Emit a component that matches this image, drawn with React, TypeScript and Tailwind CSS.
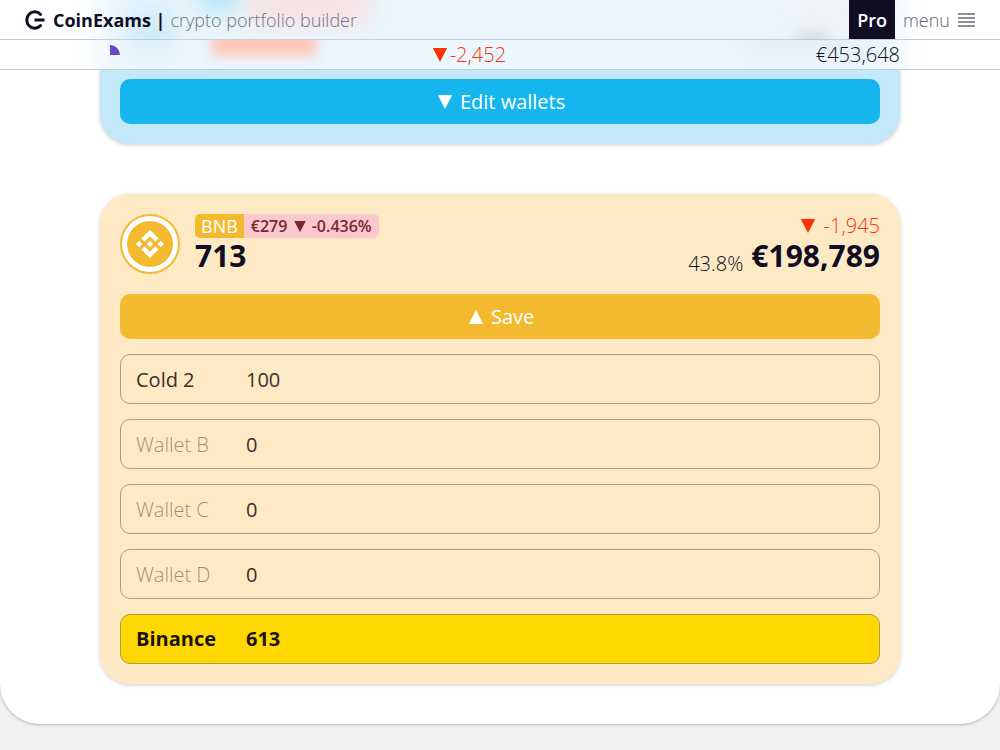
import React from "react";
import { SiBinance } from "react-icons/si";

const wallets = [
  { name: "Cold 2", amount: "100", style: "text-[#38302c]" },
  { name: "Wallet B", amount: "0", style: "font-light text-[#38302c]/50" },
  { name: "Wallet C", amount: "0", style: "font-light text-[#38302c]/50" },
  { name: "Wallet D", amount: "0", style: "font-light text-[#38302c]/50" },
];

function Logo() {
  return (
    <svg width="20" height="20" viewBox="0 0 20 20" fill="none" stroke="#110d24" strokeWidth="3">
      <path d="M15.6 4.4A8 8.2 0 1 0 15.6 15.6" strokeLinecap="round" />
      <path d="M9.5 10h10" />
    </svg>
  );
}

function MenuIcon() {
  return (
    <svg width="17" height="14" viewBox="0 0 17 14" fill="#8f8d98">
      <rect y="0" width="17" height="2" />
      <rect y="4" width="17" height="2" />
      <rect y="8" width="17" height="2" />
      <rect y="12" width="17" height="2" />
    </svg>
  );
}

// sized in em so it follows the text beside it
function Triangle({ up = false }: { up?: boolean }) {
  return (
    <svg className="inline w-[1em] align-baseline" viewBox="0 0 20 14" fill="currentColor" aria-hidden="true">
      <path d={up ? "M10 0L17.2 14H2.8Z" : "M2.8 0H17.2L10 14Z"} />
    </svg>
  );
}

function Header() {
  return (
    <header className="sticky top-0 z-10 bg-white">
      <div className="relative overflow-hidden border-b border-[#c3cbd4]">
        <div aria-hidden="true" className="absolute inset-0 flex justify-center">
          <div className="relative w-full max-w-[800px]">
            <div className="absolute -inset-y-8 inset-x-0 bg-[#ebf6fd] blur-md" />
            <div className="absolute left-7 top-1 h-14 w-12 rounded-full bg-[#cdecf9] blur-md" />
            <div className="absolute left-24 -top-6 h-9 w-12 rounded-full bg-[#b5e4f8] blur-md" />
            <div className="absolute left-36 -top-3 h-9 w-32 rounded-full bg-[#f8e0e0] blur-md" />
            <div className="absolute right-6 -top-2 h-10 w-24 rounded-full bg-[#f1f3f6] blur-md" />
            <div className="absolute right-18 top-9 h-4 w-8 rounded-full bg-[#c3c9d3] blur-sm" />
          </div>
        </div>
        <div className="relative flex h-[39px] items-center justify-between px-[25px]">
          <a href="#" className="flex items-center text-lg">
            <Logo />
            <span className="ml-2 font-bold">CoinExams |</span>
            <span className="ml-[5px] font-light text-[#6f7580]">crypto portfolio builder</span>
          </a>
          <nav className="flex h-full items-center text-lg">
            <a href="#" className="flex h-full items-center bg-[#110d24] px-2 font-semibold text-white">
              Pro
            </a>
            <button className="flex items-center gap-2 pl-2 font-light text-[#66646f]">
              menu
              <MenuIcon />
            </button>
          </nav>
        </div>
      </div>
      <div className="relative overflow-hidden border-b border-[#c3cbd4]">
        <div aria-hidden="true" className="absolute inset-0 flex justify-center">
          <div className="relative w-full max-w-[800px]">
            <div className="absolute -inset-y-8 inset-x-0 bg-[#ebf6fd] blur-md" />
            <div className="absolute left-9 -top-3 h-5 w-8 rounded-full bg-[#cdecf9] blur-md" />
            <div className="absolute left-28 -top-2 h-6 w-26 bg-[#ffc5b6] blur-[6px]" />
            <div className="absolute right-10 -top-3 h-5 w-28 bg-[#e3eaf1] blur-md" />
          </div>
        </div>
        <div className="relative mx-auto flex h-[29px] max-w-[800px] items-center justify-between text-xl font-light">
          <svg width="20" height="20" viewBox="0 0 20 20">
            <path d="M10 10V0A10 10 0 0 1 20 10Z" fill="#6449c8" />
          </svg>
          <p className="text-[#fa3208]">
            <Triangle />
            -2,452
          </p>
          <p>€453,648</p>
        </div>
      </div>
    </header>
  );
}

export default function App() {
  return (
    <div className="min-h-screen bg-[#f2f2f2] font-['Open_Sans',sans-serif] text-[#110d24]">
      <div className="rounded-b-[40px] bg-white pb-10 shadow-[0_1px_3px_rgba(0,0,0,0.25)]">
        <Header />
        <main className="mx-auto flex max-w-[800px] flex-col gap-[50px]">
          <section className="rounded-b-[30px] bg-[#c3e8fa] px-5 pb-5 pt-[9px] shadow-[0_1px_4px_rgba(0,0,0,0.2)]">
            <button className="h-[45px] w-full rounded-[10px] bg-[#15b5ee] text-xl text-white">
              <Triangle /> Edit wallets
            </button>
          </section>

          <section className="flex flex-col gap-[15px] rounded-[30px] bg-[#fde9c3] p-5 shadow-[0_1px_4px_rgba(0,0,0,0.2)]">
            <div className="mb-[5px] flex gap-[15px]">
              <div className="flex size-[60px] items-center justify-center rounded-full border-2 border-[#f3ba2f] bg-white">
                <div className="flex size-[46px] items-center justify-center rounded-full bg-[#f3ba2f] text-white">
                  <SiBinance size={28} />
                </div>
              </div>
              <div>
                <div className="flex h-6 overflow-hidden rounded-[5px] leading-6">
                  <span className="bg-[#f3ba2f] px-1.5 text-lg leading-6 text-white">BNB</span>
                  <span className="bg-[#fac8cd] px-[7px] font-semibold text-[#7b2535]">
                    €279 <Triangle /> -0.436%
                  </span>
                </div>
                <p className="text-3xl font-bold leading-9">713</p>
              </div>
              <div className="ml-auto text-right">
                <p className="text-xl font-light leading-6 text-[#fa3208]">
                  <Triangle /> -1,945
                </p>
                <p className="flex items-end gap-2">
                  <span className="text-xl font-light leading-5">43.8%</span>
                  <span className="text-3xl font-bold leading-9">€198,789</span>
                </p>
              </div>
            </div>

            <button className="h-[45px] w-full rounded-[10px] bg-[#f3ba2f] text-xl text-white">
              <Triangle up /> Save
            </button>

            {wallets.map(({ name, amount, style }) => (
              <label
                key={name}
                className="flex h-[50px] items-center rounded-[10px] border border-[#a69d91] px-[15px] pt-0.5 text-xl"
              >
                <span className={`w-[110px] ${style}`}>{name}</span>
                <input
                  className="min-w-0 flex-1 bg-transparent text-[#38302c] outline-none"
                  defaultValue={amount}
                />
              </label>
            ))}
            <label className="flex h-[50px] items-center rounded-[10px] border border-[#b09a4c] bg-[#ffd800] px-[15px] text-xl font-bold text-[#1b1508]">
              <span className="w-[110px]">Binance</span>
              <input
                className="min-w-0 flex-1 bg-transparent outline-none"
                defaultValue="613"
                readOnly
              />
            </label>
          </section>
        </main>
      </div>
    </div>
  );
}
